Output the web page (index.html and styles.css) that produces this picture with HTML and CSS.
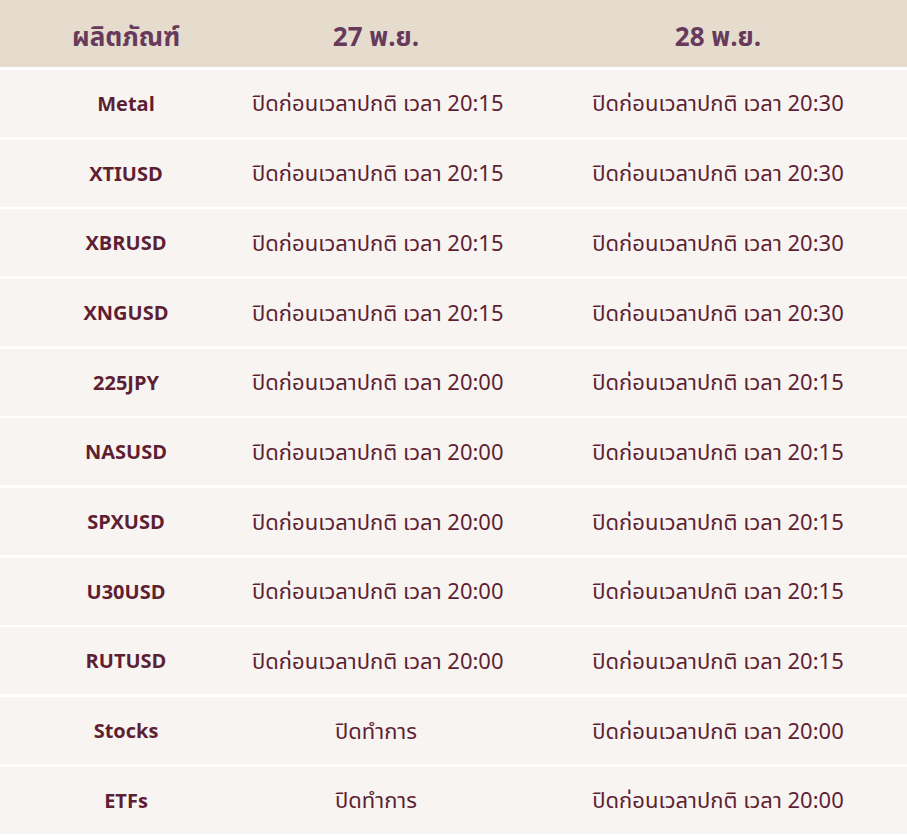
FILE: index.html
```html
<!DOCTYPE html>
<html lang="th">
<head>
<meta charset="utf-8">
<title>ตารางเวลาทำการ</title>
<link rel="stylesheet" href="styles.css">
</head>
<body>
<div class="schedule">
  <div class="row head">
    <div class="cell">ผลิตภัณฑ์</div>
    <div class="cell">27 พ.ย.</div>
    <div class="cell last">28 พ.ย.</div>
  </div>
  <div class="row"><div class="cell name">Metal</div><div class="cell">ปิดก่อนเวลาปกติ เวลา 20:15</div><div class="cell last">ปิดก่อนเวลาปกติ เวลา 20:30</div></div>
  <div class="row"><div class="cell name">XTIUSD</div><div class="cell">ปิดก่อนเวลาปกติ เวลา 20:15</div><div class="cell last">ปิดก่อนเวลาปกติ เวลา 20:30</div></div>
  <div class="row"><div class="cell name">XBRUSD</div><div class="cell">ปิดก่อนเวลาปกติ เวลา 20:15</div><div class="cell last">ปิดก่อนเวลาปกติ เวลา 20:30</div></div>
  <div class="row"><div class="cell name">XNGUSD</div><div class="cell">ปิดก่อนเวลาปกติ เวลา 20:15</div><div class="cell last">ปิดก่อนเวลาปกติ เวลา 20:30</div></div>
  <div class="row"><div class="cell name">225JPY</div><div class="cell">ปิดก่อนเวลาปกติ เวลา 20:00</div><div class="cell last">ปิดก่อนเวลาปกติ เวลา 20:15</div></div>
  <div class="row"><div class="cell name">NASUSD</div><div class="cell">ปิดก่อนเวลาปกติ เวลา 20:00</div><div class="cell last">ปิดก่อนเวลาปกติ เวลา 20:15</div></div>
  <div class="row"><div class="cell name">SPXUSD</div><div class="cell">ปิดก่อนเวลาปกติ เวลา 20:00</div><div class="cell last">ปิดก่อนเวลาปกติ เวลา 20:15</div></div>
  <div class="row"><div class="cell name">U30USD</div><div class="cell">ปิดก่อนเวลาปกติ เวลา 20:00</div><div class="cell last">ปิดก่อนเวลาปกติ เวลา 20:15</div></div>
  <div class="row"><div class="cell name">RUTUSD</div><div class="cell">ปิดก่อนเวลาปกติ เวลา 20:00</div><div class="cell last">ปิดก่อนเวลาปกติ เวลา 20:15</div></div>
  <div class="row"><div class="cell name">Stocks</div><div class="cell">ปิดทำการ</div><div class="cell last">ปิดก่อนเวลาปกติ เวลา 20:00</div></div>
  <div class="row"><div class="cell name">ETFs</div><div class="cell">ปิดทำการ</div><div class="cell last">ปิดก่อนเวลาปกติ เวลา 20:00</div></div>
</div>
</body>
</html>
```
FILE: styles.css
```css
html, body {
  margin: 0;
  padding: 0;
  background: #ffffff;
}
body {
  font-family: "Noto Sans Thai", "Noto Sans", "Liberation Sans", sans-serif;
  color: #5e1f33;
}
.schedule {
  display: grid;
  row-gap: 2.7px;
}
.row {
  display: grid;
  grid-template-columns: 252px 248px 1fr;
  align-items: center;
  box-sizing: border-box;
  height: 67px;
  padding-top: 3px;
  background: #f8f4f1;
  font-size: 22px;
}
.row.head {
  height: 67.3px;
  padding-top: 8px;
  background: #e5dccd;
  color: #673a5c;
  font-size: 26px;
  font-weight: 700;
}
.cell {
  text-align: center;
  white-space: nowrap;
}
.cell.last {
  padding-left: 29px;
}
.name {
  font-size: 20px;
  font-weight: 700;
}
```
